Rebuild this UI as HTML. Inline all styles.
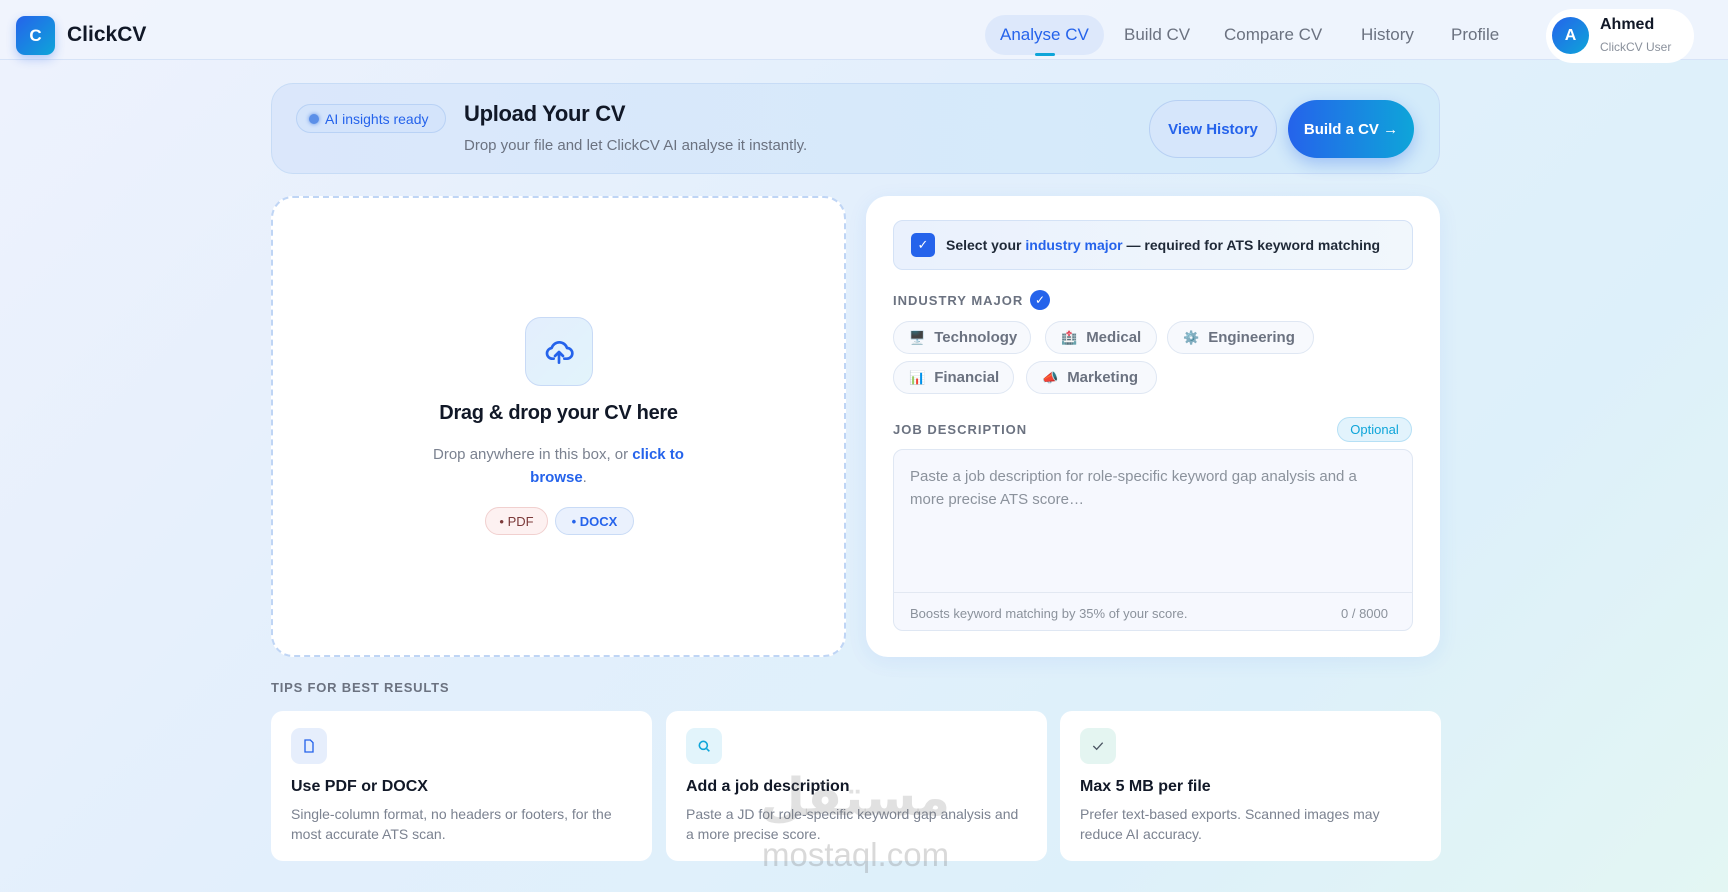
<!DOCTYPE html>
<html><head><meta charset="utf-8"><style>
*{box-sizing:border-box;margin:0;padding:0}
body{width:1728px;height:892px;overflow:hidden;font-family:"Liberation Sans",sans-serif;background:linear-gradient(135deg,#eef2fd 0%,#e3effc 40%,#ddf0fa 75%,#e3f6f3 100%);position:relative;color:#111827}
.a{position:absolute}
.hdr{left:0;top:0;width:1728px;height:60px;background:rgba(240,244,253,.9);border-bottom:1px solid #d6e3f7}
.logo{left:16px;top:16px;width:39px;height:39px;border-radius:9px;background:linear-gradient(135deg,#2563eb,#0ea5d9);color:#fff;font-weight:bold;font-size:17px;display:flex;align-items:center;justify-content:center;box-shadow:0 4px 10px rgba(37,99,235,.3)}
.nav{font-size:17px;color:#6b7280;top:25px}
.card{background:#fff;border-radius:22px}
.chip{height:33px;border:1px solid #dfe7f3;border-radius:17px;background:#f7f9fd;font-size:15px;font-weight:bold;color:#6b7280;display:flex;align-items:center;padding:0 15px;gap:9px;white-space:nowrap}
.chip span{font-size:13px;line-height:1;font-weight:normal}
.lbl{font-size:13px;letter-spacing:1px;color:#6b7280;font-weight:bold}
.tip{top:711px;height:150px;width:381px;background:#fff;border-radius:12px}
.tip .ic{position:absolute;left:20px;top:17px;width:36px;height:36px;border-radius:9px;display:flex;align-items:center;justify-content:center}
.tip h4{position:absolute;left:20px;top:67px;font-size:16px;color:#111827}
.tip p{position:absolute;left:20px;top:93px;width:335px;font-size:14px;line-height:20px;color:#7b8290}
</style></head><body>
<div class="a hdr"></div>
<div class="a logo">C</div>
<div class="a" style="left:67px;top:23px;font-size:21px;font-weight:bold">ClickCV</div>
<div class="a" style="left:985px;top:15px;width:119px;height:40px;border-radius:20px;background:#dde8fb"></div>
<div class="a nav" style="left:1000px;color:#2563eb">Analyse CV</div>
<div class="a" style="left:1035px;top:53px;width:20px;height:3px;border-radius:2px;background:#0ea5d9"></div>
<div class="a nav" style="left:1124px">Build CV</div>
<div class="a nav" style="left:1224px">Compare CV</div>
<div class="a nav" style="left:1361px">History</div>
<div class="a nav" style="left:1451px">Profile</div>
<div class="a" style="left:1546px;top:9px;width:148px;height:54px;border-radius:27px;background:#fff"></div>
<div class="a" style="left:1552px;top:17px;width:37px;height:37px;border-radius:50%;background:linear-gradient(135deg,#2563eb,#0ea5d9);color:#fff;font-weight:bold;font-size:16px;display:flex;align-items:center;justify-content:center">A</div>
<div class="a" style="left:1600px;top:16px;font-size:16px;font-weight:bold">Ahmed</div>
<div class="a" style="left:1600px;top:40px;font-size:12px;color:#8a919c">ClickCV User</div>

<div class="a" style="left:271px;top:83px;width:1169px;height:91px;border-radius:22px;background:linear-gradient(90deg,#dbe7fb,#d3ebfa);border:1px solid #c7dcf6"></div>
<div class="a" style="left:296px;top:104px;width:150px;height:29px;border-radius:15px;background:#d4e4fb;border:1px solid #b9d2f5;font-size:14px;color:#2563eb;display:flex;align-items:center;padding-left:12px;gap:6px"><span style="width:10px;height:10px;border-radius:50%;background:#5b8fe8;box-shadow:0 0 4px #5b8fe8"></span>AI insights ready</div>
<div class="a" style="left:464px;top:101px;font-size:22px;font-weight:bold;letter-spacing:-.3px">Upload Your CV</div>
<div class="a" style="left:464px;top:137px;font-size:15px;color:#6b7280">Drop your file and let ClickCV AI analyse it instantly.</div>
<div class="a" style="left:1149px;top:100px;width:128px;height:58px;border-radius:29px;background:#d6e6fb;border:1px solid #b7d0f3;color:#2563eb;font-weight:bold;font-size:15px;display:flex;align-items:center;justify-content:center">View History</div>
<div class="a" style="left:1288px;top:100px;width:126px;height:58px;border-radius:29px;background:linear-gradient(90deg,#2563eb,#0ea5d9);color:#fff;font-weight:bold;font-size:15px;display:flex;align-items:center;justify-content:center;box-shadow:0 6px 16px rgba(37,99,235,.3)">Build a CV →</div>

<div class="a" style="left:271px;top:196px;width:575px;height:461px;border-radius:22px;background:#fff;border:2px dashed #bfd5f5"></div>
<div class="a" style="left:525px;top:317px;width:68px;height:69px;border-radius:16px;background:linear-gradient(135deg,#e3eefd,#e2f4fb);border:1px solid #c8daf6;display:flex;align-items:center;justify-content:center">
<svg width="32" height="32" viewBox="0 0 24 24" fill="none" stroke="#2563eb" stroke-width="2" stroke-linecap="round" stroke-linejoin="round"><path d="M8 17H7a4 4 0 0 1-.5-7.97A6 6 0 0 1 18 9a4 4 0 0 1 0 8h-2"/><path d="M12 20v-8M9 15l3-3 3 3"/></svg></div>
<div class="a" style="left:271px;width:575px;top:402px;text-align:center;font-size:20px;font-weight:bold;letter-spacing:-.3px">Drag &amp; drop your CV here</div>
<div class="a" style="left:415px;width:287px;top:443px;text-align:center;font-size:15px;line-height:23px;color:#7b8290">Drop anywhere in this box, or <b style="color:#2563eb">click to browse</b>.</div>
<div class="a" style="left:485px;top:507px;width:63px;height:28px;border-radius:14px;background:#fdf1f1;border:1px solid #f1d0cf;font-size:13px;color:#7c3a3a;display:flex;align-items:center;justify-content:center">• PDF</div>
<div class="a" style="left:555px;top:507px;width:79px;height:28px;border-radius:14px;background:#eaf1fd;border:1px solid #c9dbf6;font-size:13px;color:#2563eb;font-weight:bold;display:flex;align-items:center;justify-content:center">• DOCX</div>

<div class="a card" style="left:866px;top:196px;width:574px;height:461px;box-shadow:0 4px 20px rgba(37,99,235,.08)"></div>
<div class="a" style="left:893px;top:220px;width:520px;height:50px;border-radius:10px;background:linear-gradient(90deg,#eaf1fd,#f1f7fc);border:1px solid #d4e2f6"></div>
<div class="a" style="left:911px;top:233px;width:24px;height:24px;border-radius:5px;background:#2563eb;color:#fff;font-size:13px;display:flex;align-items:center;justify-content:center">✓</div>
<div class="a" style="left:946px;top:237px;font-size:14px;font-weight:bold;color:#1f2937;white-space:nowrap">Select your <span style="color:#2563eb">industry major</span> — required for ATS keyword matching</div>
<div class="a lbl" style="left:893px;top:293px">INDUSTRY MAJOR</div>
<div class="a" style="left:1030px;top:290px;width:20px;height:20px;border-radius:50%;background:#2563eb;color:#fff;font-size:12px;display:flex;align-items:center;justify-content:center">✓</div>
<div class="a chip" style="left:893px;top:321px;width:138px"><span>🖥️</span>Technology</div>
<div class="a chip" style="left:1045px;top:321px;width:112px"><span>🏥</span>Medical</div>
<div class="a chip" style="left:1167px;top:321px;width:147px"><span>⚙️</span>Engineering</div>
<div class="a chip" style="left:893px;top:361px;width:121px"><span>📊</span>Financial</div>
<div class="a chip" style="left:1026px;top:361px;width:131px"><span>📣</span>Marketing</div>
<div class="a lbl" style="left:893px;top:422px">JOB DESCRIPTION</div>
<div class="a" style="left:1337px;top:417px;width:75px;height:25px;border-radius:13px;background:#e2f3fc;border:1px solid #b6e0f5;color:#0ea5d9;font-size:13px;display:flex;align-items:center;justify-content:center">Optional</div>
<div class="a" style="left:893px;top:449px;width:520px;height:182px;border-radius:10px;background:#f6f8fe;border:1px solid #dfe7f3"></div>
<div class="a" style="left:893px;top:592px;width:520px;height:1px;background:#e2e8f2"></div>
<div class="a" style="left:910px;top:465px;width:480px;font-size:15px;line-height:23px;color:#8b929c">Paste a job description for role-specific keyword gap analysis and a more precise ATS score…</div>
<div class="a" style="left:910px;top:606px;font-size:13px;color:#8b929c">Boosts keyword matching by 35% of your score.</div>
<div class="a" style="left:1341px;top:606px;font-size:13px;color:#8b929c">0 / 8000</div>

<div class="a" style="left:271px;top:680px;font-size:13px;font-weight:bold;letter-spacing:.8px;color:#6b7280">TIPS FOR BEST RESULTS</div>
<div class="a tip" style="left:271px"><div class="ic" style="background:#e6eefc"><svg width="16" height="16" viewBox="0 0 24 24" fill="none" stroke="#2563eb" stroke-width="2"><path d="M6 3h8l4 4v14H6z"/></svg></div><h4>Use PDF or DOCX</h4><p>Single-column format, no headers or footers, for the most accurate ATS scan.</p></div>
<div class="a tip" style="left:666px"><div class="ic" style="background:#e2f4fb"><svg width="16" height="16" viewBox="0 0 24 24" fill="none" stroke="#0ea5d9" stroke-width="2.4"><circle cx="11" cy="11" r="6"/><path d="M16 16l4 4"/></svg></div><h4>Add a job description</h4><p>Paste a JD for role-specific keyword gap analysis and a more precise score.</p></div>
<div class="a tip" style="left:1060px"><div class="ic" style="background:#e4f5f1"><svg width="16" height="16" viewBox="0 0 24 24" fill="none" stroke="#4b5563" stroke-width="2"><path d="M5 12l5 5 9-10"/></svg></div><h4>Max 5 MB per file</h4><p>Prefer text-based exports. Scanned images may reduce AI accuracy.</p></div>
<div class="a" style="left:760px;top:768px;font-size:52px;font-weight:bold;color:rgba(120,120,120,.22);font-family:'DejaVu Sans',sans-serif">مستقل</div>
<div class="a" style="left:762px;top:836px;font-size:33px;color:rgba(120,120,120,.28)">mostaql.com</div>
</body></html>
